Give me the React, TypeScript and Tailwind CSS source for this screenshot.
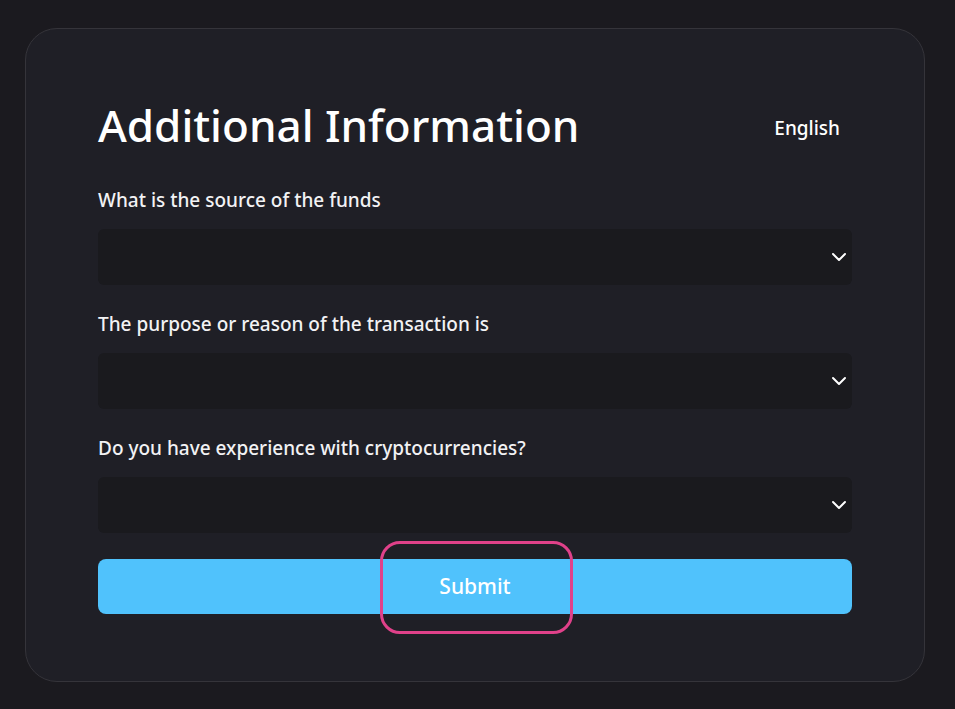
import { ChevronDown } from 'lucide-react';

const QUESTIONS = [
  'What is the source of the funds',
  'The purpose or reason of the transaction is',
  'Do you have experience with cryptocurrencies?',
];

function SelectField({ label }: { label: string }) {
  return (
    <div className="flex flex-col">
      <label className="text-[19px] leading-[24px] font-medium text-[#f2f2f4]">{label}</label>
      <div className="mt-[17px] flex h-[56px] items-center justify-end rounded-[6px] bg-[#1a1a1e] pr-[1px]">
        <ChevronDown className="h-[24px] w-[24px] text-white" strokeWidth={2} />
      </div>
    </div>
  );
}

export default function App() {
  return (
    <div
      className="min-h-[709px] w-full bg-[#1b1a1f] pt-[28px] pl-[25px] pr-[30px]"
      style={{ fontFamily: '"Noto Sans", Inter, sans-serif' }}
    >
      <div className="relative h-[654px] w-[900px] rounded-[32px] border border-[#35343a] bg-[#1f1f26] px-[72px] pt-[69px]">
        <div className="flex items-center justify-between">
          <h1 className="text-[44px] leading-[54px] font-medium text-white">Additional Information</h1>
          <span className="mr-[12px] mt-[6px] text-[19px] font-medium text-white">English</span>
        </div>
        <div className="mt-[36px] flex flex-col gap-[27px]">
          {QUESTIONS.map((q) => (
            <SelectField key={q} label={q} />
          ))}
        </div>
        <button className="mt-[26px] flex h-[55px] w-full items-center justify-center rounded-[8px] bg-[#50c2fc] text-[21px] font-medium text-white">
          Submit
        </button>
        <div className="pointer-events-none absolute left-[354px] top-[512px] h-[93px] w-[193px] rounded-[20px] border-[3px] border-[#e0418a]" />
      </div>
    </div>
  );
}
